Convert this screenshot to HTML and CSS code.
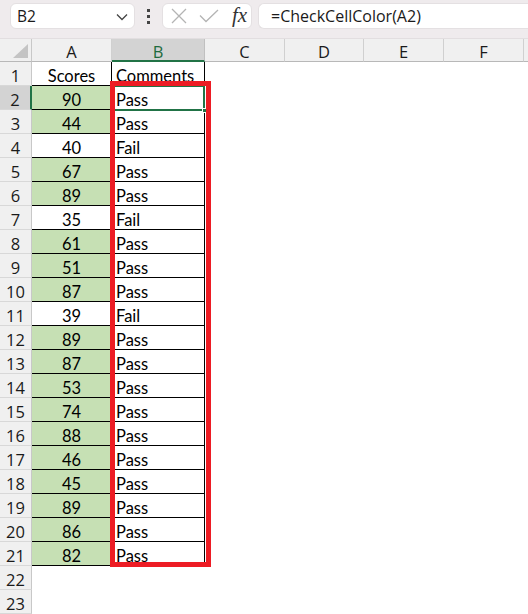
FILE: index.html
```html
<!DOCTYPE html>
<html>
<head>
<meta charset="utf-8">
<link rel="stylesheet" href="styles.css">
</head>
<body>
<div class="topbar">
  <div class="namebox">
    <span class="nb-text">B2</span>
    <svg class="chev" width="12" height="8" viewBox="0 0 12 8"><path d="M1 1.5 L6 6.5 L11 1.5" fill="none" stroke="#444" stroke-width="1.3"/></svg>
  </div>
  <div class="dots"><span></span><span></span><span></span></div>
  <div class="fxbox">
    <svg class="ico" width="16" height="16" viewBox="0 0 16 16"><path d="M1 1 L15 15 M15 1 L1 15" stroke="#b4b4b4" stroke-width="1.3" fill="none"/></svg>
    <svg class="ico chk" width="20" height="14" viewBox="0 0 20 14"><path d="M1 6.5 L7 12.5 L19 1" stroke="#b4b4b4" stroke-width="1.3" fill="none"/></svg>
    <span class="fx">fx</span>
  </div>
  <div class="formula">=CheckCellColor(A2)</div>
</div>

<div class="sheet">
  <div class="corner"><span class="tri"></span></div>
  <div class="ch">A</div>
  <div class="ch sel">B</div>
  <div class="ch">C</div>
  <div class="ch">D</div>
  <div class="ch">E</div>
  <div class="ch">F</div>
  <div class="ch last"></div>

  <div class="rh">1</div><div class="c num">Scores</div><div class="c txt">Comments</div><div class="rest"></div>
  <div class="rh selrow">2</div><div class="c num pass">90</div><div class="c txt">Pass</div><div class="rest"></div>
  <div class="rh">3</div><div class="c num pass">44</div><div class="c txt">Pass</div><div class="rest"></div>
  <div class="rh">4</div><div class="c num">40</div><div class="c txt">Fail</div><div class="rest"></div>
  <div class="rh">5</div><div class="c num pass">67</div><div class="c txt">Pass</div><div class="rest"></div>
  <div class="rh">6</div><div class="c num pass">89</div><div class="c txt">Pass</div><div class="rest"></div>
  <div class="rh">7</div><div class="c num">35</div><div class="c txt">Fail</div><div class="rest"></div>
  <div class="rh">8</div><div class="c num pass">61</div><div class="c txt">Pass</div><div class="rest"></div>
  <div class="rh">9</div><div class="c num pass">51</div><div class="c txt">Pass</div><div class="rest"></div>
  <div class="rh">10</div><div class="c num pass">87</div><div class="c txt">Pass</div><div class="rest"></div>
  <div class="rh">11</div><div class="c num">39</div><div class="c txt">Fail</div><div class="rest"></div>
  <div class="rh">12</div><div class="c num pass">89</div><div class="c txt">Pass</div><div class="rest"></div>
  <div class="rh">13</div><div class="c num pass">87</div><div class="c txt">Pass</div><div class="rest"></div>
  <div class="rh">14</div><div class="c num pass">53</div><div class="c txt">Pass</div><div class="rest"></div>
  <div class="rh">15</div><div class="c num pass">74</div><div class="c txt">Pass</div><div class="rest"></div>
  <div class="rh">16</div><div class="c num pass">88</div><div class="c txt">Pass</div><div class="rest"></div>
  <div class="rh">17</div><div class="c num pass">46</div><div class="c txt">Pass</div><div class="rest"></div>
  <div class="rh">18</div><div class="c num pass">45</div><div class="c txt">Pass</div><div class="rest"></div>
  <div class="rh">19</div><div class="c num pass">89</div><div class="c txt">Pass</div><div class="rest"></div>
  <div class="rh">20</div><div class="c num pass">86</div><div class="c txt">Pass</div><div class="rest"></div>
  <div class="rh">21</div><div class="c num pass">82</div><div class="c txt">Pass</div><div class="rest"></div>
  <div class="rh">22</div><div class="blank"></div>
  <div class="rh">23</div><div class="blank"></div>

  <div class="selbox"><span class="handle"></span></div>
  <div class="redbox"></div>
</div>
</body>
</html>
```

FILE: styles.css
```css
* { box-sizing: border-box; }
html, body { margin: 0; padding: 0; }
body {
  width: 528px;
  height: 614px;
  overflow: hidden;
  background: #ffffff;
  font-family: "Open Sans", "Noto Sans", sans-serif;
  color: #1a1a1a;
}

.topbar {
  height: 39px;
  background: #efebed;
  display: flex;
  align-items: flex-start;
  padding: 3px 0 0 10px;
  border-bottom: 1px solid #e2dee0;
}
.namebox {
  width: 125px;
  height: 26px;
  background: #fff;
  border-radius: 6px;
  border: 1px solid #e4e0e2;
  display: flex;
  align-items: center;
  padding: 0 6px 0 6px;
  justify-content: space-between;
}
.nb-text { font-size: 15.5px; color: #1a1a1a; }
.chev { margin-top: 2px; }
.dots {
  width: 27px;
  display: flex;
  flex-direction: column;
  align-items: center;
  gap: 3px;
  padding-top: 6px;
}
.dots span {
  width: 3px;
  height: 3px;
  background: #444;
  display: block;
}
.fxbox {
  width: 90px;
  height: 26px;
  background: #fff;
  border-radius: 6px;
  border: 1px solid #e4e0e2;
  display: flex;
  align-items: center;
  padding-left: 8px;
}
.ico { display: block; }
.chk { margin-left: 12px; }
.fx {
  margin-left: 13px;
  font-family: "Liberation Serif", "DejaVu Serif", serif;
  font-style: italic;
  font-size: 21px;
  color: #333;
  line-height: 1;
  margin-top: -2px;
}
.formula {
  flex: 1;
  height: 26px;
  margin-left: 6px;
  background: #fff;
  border-radius: 6px 0 0 6px;
  border: 1px solid #e4e0e2;
  border-right: none;
  font-size: 16px;
  line-height: 24px;
  padding-left: 12px;
  color: #1a1a1a;
}

.sheet {
  position: relative;
  display: grid;
  grid-template-columns: 32px 80px 93px 80px 79px 80px 80px 1fr;
  grid-template-rows: 23px repeat(23, 24px);
}
.corner {
  background: #f0f0f0;
  border-right: 1px solid #c8c8c8;
  border-bottom: 1px solid #b8b8b8;
  position: relative;
}
.tri {
  position: absolute;
  right: 3px;
  bottom: 3px;
  width: 0;
  height: 0;
  border-left: 15px solid transparent;
  border-bottom: 14px solid #c4c4c4;
}
.ch {
  background: #f0f0f0;
  border-right: 1px solid #d0d0d0;
  border-bottom: 1px solid #b8b8b8;
  text-align: center;
  font-size: 16.5px;
  line-height: 23px;
  padding-top: 1px;
  color: #1a1a1a;
}
.ch.sel {
  background: #d3d3d3;
  color: #1f6b3e;
  border-bottom: 2px solid #217346;
  border-right-color: #c0c0c0;
}
.ch.last { border-right: none; }

.rh {
  grid-column: 1;
  background: #f0f0f0;
  border-right: 1px solid #c8c8c8;
  border-bottom: 1px solid #d8d8d8;
  text-align: center;
  font-size: 16.5px;
  line-height: 24px;
  padding-top: 2px;
  color: #1a1a1a;
  overflow: hidden;
}
.rh.selrow {
  background: #d3d3d3;
  border-right: 2px solid #217346;
}
.c {
  border-right: 1px solid #000;
  border-bottom: 1px solid #000;
  font-family: "Lato", "Liberation Sans", sans-serif;
  font-size: 16.5px;
  line-height: 25px;
  padding-top: 2px;
  color: #000;
  white-space: nowrap;
  overflow: hidden;
}
.num { text-align: center; }
.txt { padding-left: 4px; }
.pass { background: #c6e0b4; }
.rest { grid-column: 4 / 9; }
.blank { grid-column: 2 / 9; }

.selbox {
  position: absolute;
  left: 112px;
  top: 46px;
  width: 93px;
  height: 26px;
  border: 2px solid #217346;
}
.handle {
  position: absolute;
  right: -4px;
  bottom: -4px;
  width: 5px;
  height: 5px;
  background: #217346;
  border: 1px solid #fff;
}
.redbox {
  position: absolute;
  left: 110px;
  top: 42px;
  width: 101px;
  height: 486px;
  border: 5px solid #ed1c24;
}
```
